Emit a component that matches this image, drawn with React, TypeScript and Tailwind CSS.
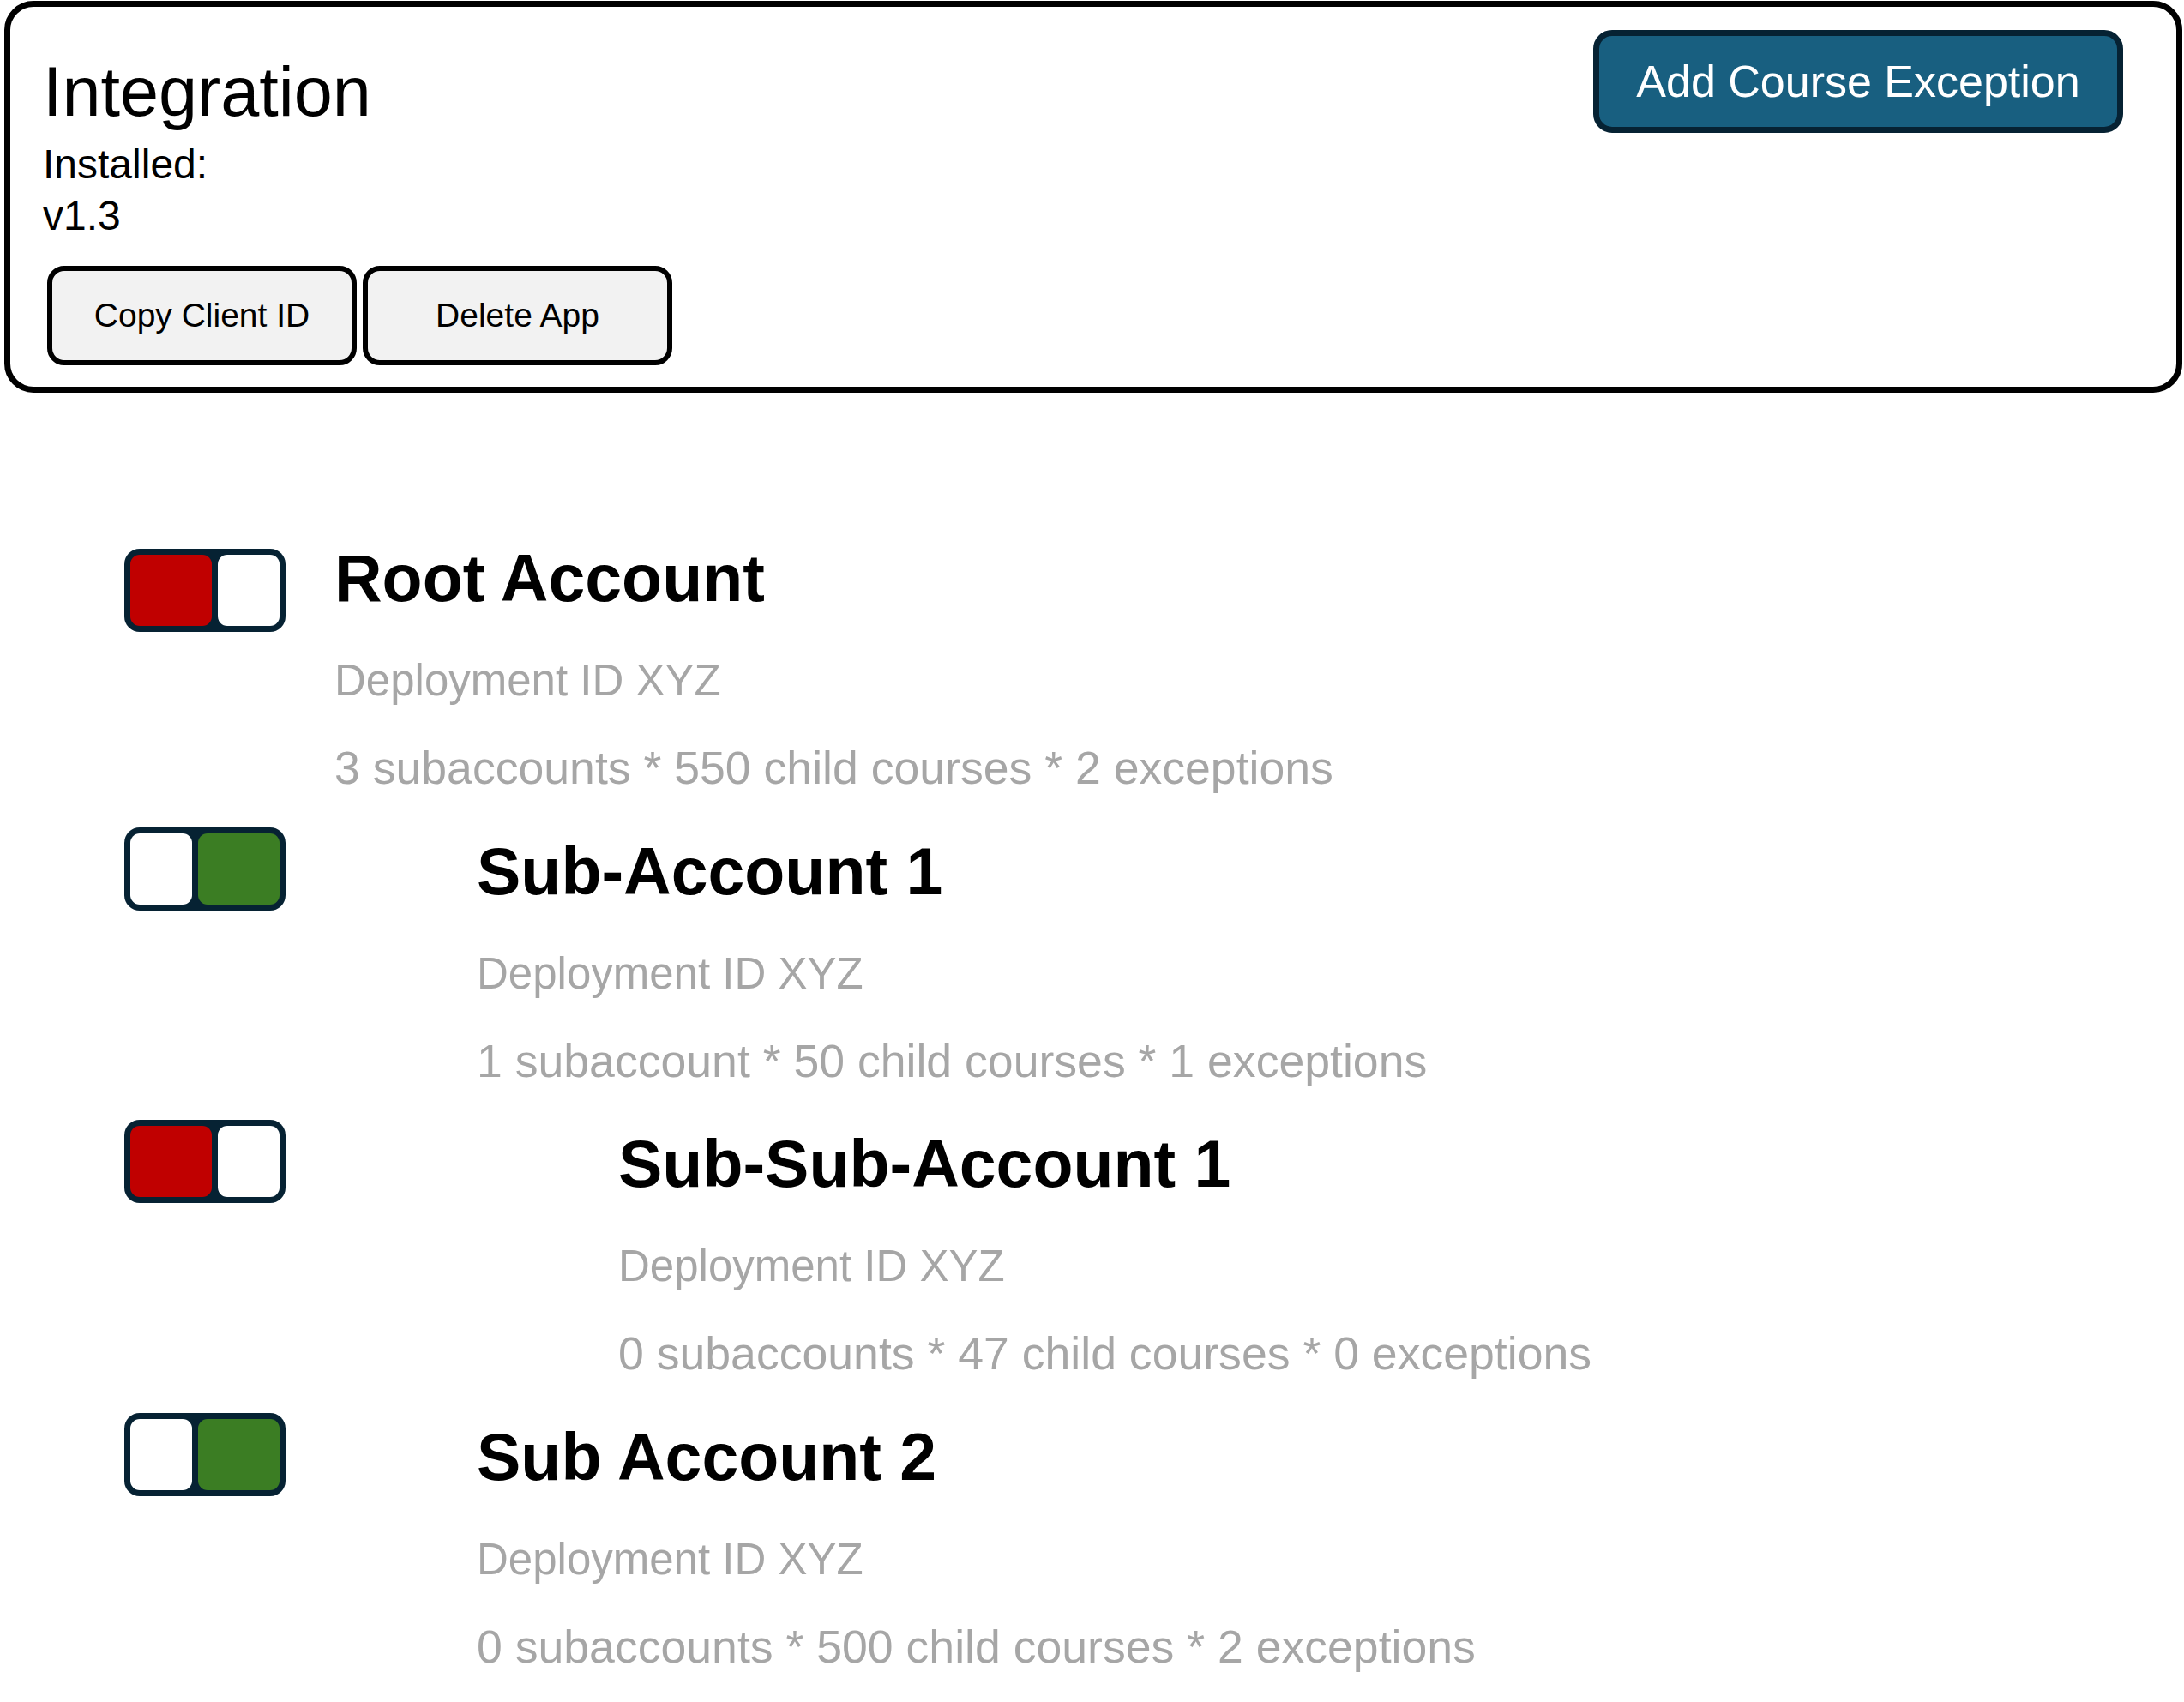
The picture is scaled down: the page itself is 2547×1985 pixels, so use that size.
type Account = {
  name: string;
  enabled: boolean;
  stats: string;
  indentClass: string;
  toggleClass: string;
};

const ACCOUNTS: Account[] = [
  {
    name: "Root Account",
    enabled: false,
    stats: "3 subaccounts * 550 child courses * 2 exceptions",
    indentClass: "ml-[57px]",
    toggleClass: "mt-[4px]",
  },
  {
    name: "Sub-Account 1",
    enabled: true,
    stats: "1 subaccount * 50 child courses * 1 exceptions",
    indentClass: "ml-[223px]",
    toggleClass: "-mt-[13px]",
  },
  {
    name: "Sub-Sub-Account 1",
    enabled: false,
    stats: "0 subaccounts * 47 child courses * 0 exceptions",
    indentClass: "ml-[388px]",
    toggleClass: "-mt-[13px]",
  },
  {
    name: "Sub Account 2",
    enabled: true,
    stats: "0 subaccounts * 500 child courses * 2 exceptions",
    indentClass: "ml-[223px]",
    toggleClass: "-mt-[13px]",
  },
];

function Toggle({ on, className }: { on: boolean; className: string }) {
  return (
    <div
      className={`flex h-[97px] w-[188px] shrink-0 gap-[7px] rounded-[18px] bg-[#062233] p-[7px] ${className}`}
    >
      {on ? (
        <>
          <div className="w-[72px] rounded-[11px] bg-white" />
          <div className="flex-1 rounded-[11px] bg-[#3b7d23]" />
        </>
      ) : (
        <>
          <div className="w-[95px] rounded-[11px] bg-[#c00000]" />
          <div className="flex-1 rounded-[11px] bg-white" />
        </>
      )}
    </div>
  );
}

function AccountRow({ account }: { account: Account }) {
  return (
    <div className="flex items-start">
      <Toggle on={account.enabled} className={account.toggleClass} />
      <div className={account.indentClass}>
        <h2 className="text-[77px] font-bold leading-none text-black">
          {account.name}
        </h2>
        <p className="mt-[55px] text-[51px] leading-none text-[#a6a6a6]">
          Deployment ID XYZ
        </p>
        <p className="mt-[50px] text-[53.6px] leading-none text-[#a6a6a6]">
          {account.stats}
        </p>
      </div>
    </div>
  );
}

export default function App() {
  return (
    <div className="min-h-screen bg-white pl-[5px] pr-[2px] pt-[1px] font-['Liberation_Sans',Arial,sans-serif] text-black">
      {/* App header card */}
      <header className="flex items-start justify-between rounded-[34px] border-[7px] border-black pb-[25px] pl-[38px] pr-[62px] pt-[27px]">
        <div className="pt-[32px]">
          <h1 className="text-[81px] leading-none">Integration</h1>
          <div className="mt-[14px] text-[48px] leading-[60px]">
            <div>Installed:</div>
            <div>v1.3</div>
          </div>
          <div className="ml-[5px] mt-[28px] flex gap-[7px]">
            <button
              type="button"
              className="h-[116px] w-[361px] rounded-[20px] border-[6px] border-black bg-[#f2f2f2] text-[39px]"
            >
              Copy Client ID
            </button>
            <button
              type="button"
              className="h-[116px] w-[361px] rounded-[20px] border-[6px] border-black bg-[#f2f2f2] text-[39px]"
            >
              Delete App
            </button>
          </div>
        </div>
        <button
          type="button"
          className="h-[120px] w-[618px] rounded-[22px] border-[7px] border-[#062233] bg-[#185f80] text-[52px] text-white"
        >
          Add Course Exception
        </button>
      </header>

      {/* Account tree */}
      <main className="flex flex-col gap-[55px] pl-[140px] pt-[178px]">
        {ACCOUNTS.map((account) => (
          <AccountRow key={account.name} account={account} />
        ))}
      </main>
    </div>
  );
}
